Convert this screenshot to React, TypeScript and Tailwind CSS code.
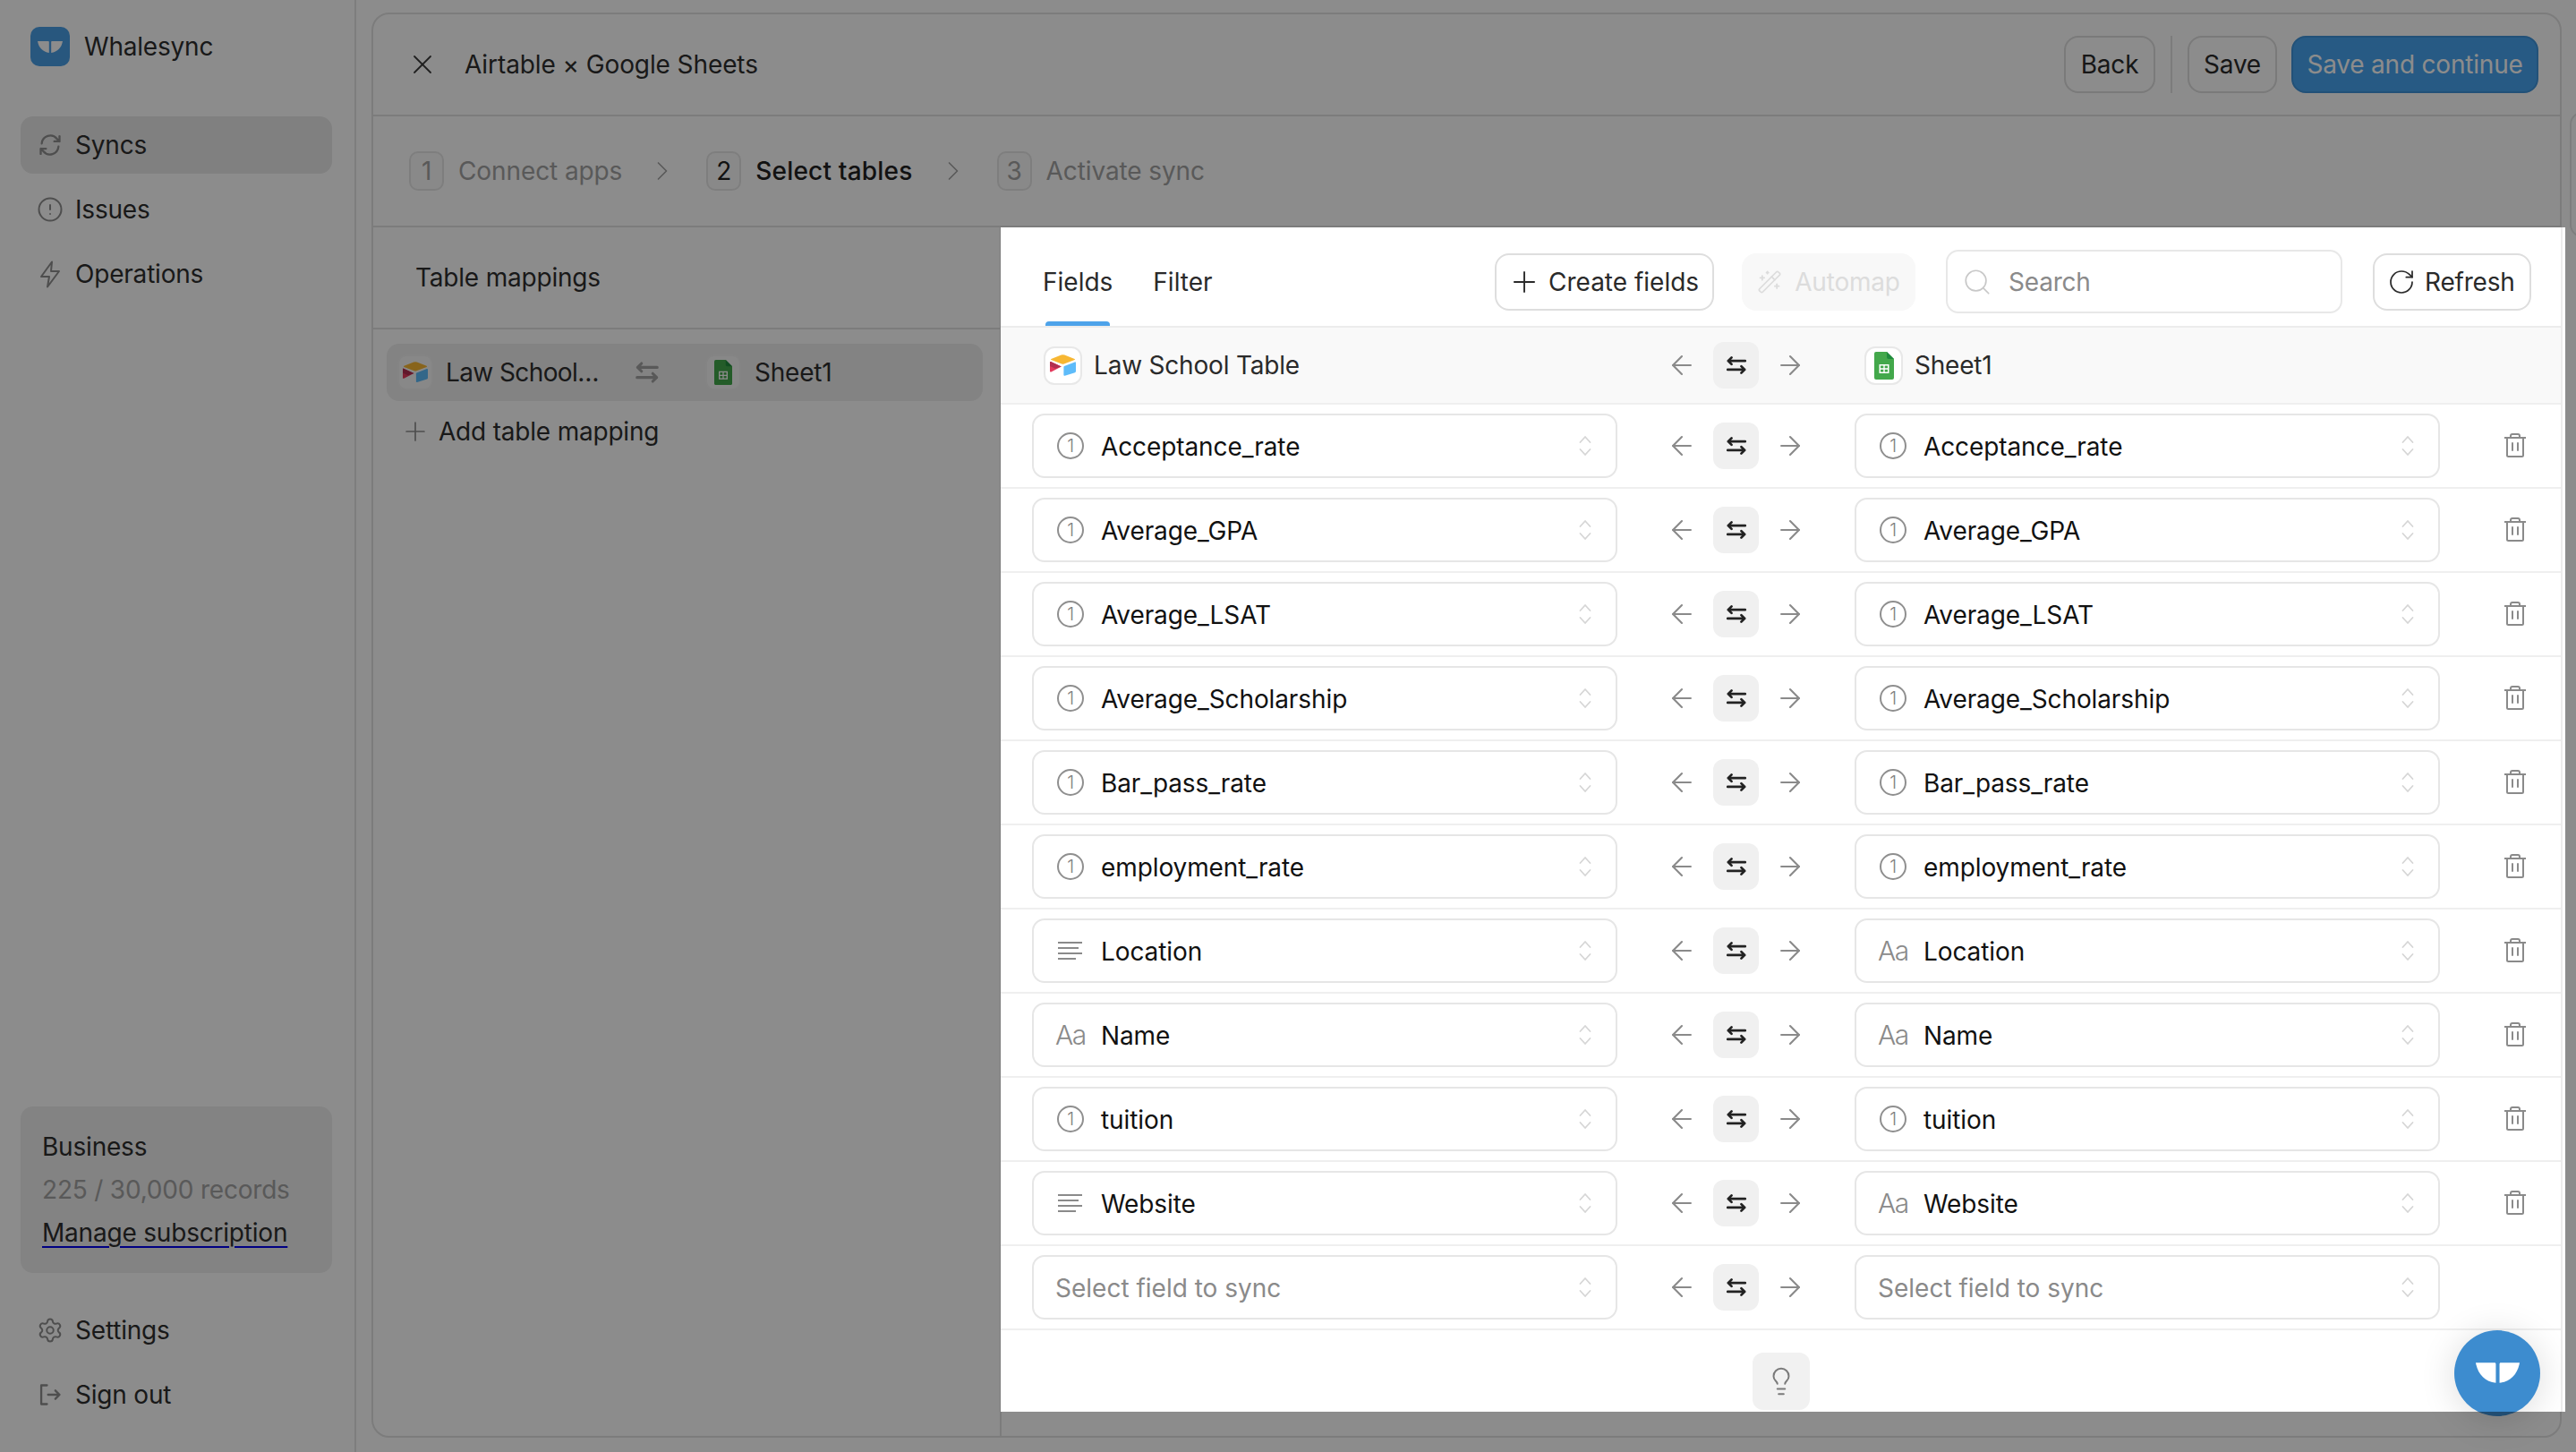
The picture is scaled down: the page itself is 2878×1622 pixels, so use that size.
import { ArrowLeft, ArrowRight, ChevronRight, Lightbulb, Plus, RotateCw, Search, Settings, WandSparkles, X, CircleAlert } from 'lucide-react'

type FieldKind = 'number' | 'lines' | 'text' | 'none'

interface FieldRow {
  name: string
  left: FieldKind
  right: FieldKind
}

const rows: FieldRow[] = [
  { name: 'Acceptance_rate', left: 'number', right: 'number' },
  { name: 'Average_GPA', left: 'number', right: 'number' },
  { name: 'Average_LSAT', left: 'number', right: 'number' },
  { name: 'Average_Scholarship', left: 'number', right: 'number' },
  { name: 'Bar_pass_rate', left: 'number', right: 'number' },
  { name: 'employment_rate', left: 'number', right: 'number' },
  { name: 'Location', left: 'lines', right: 'text' },
  { name: 'Name', left: 'text', right: 'text' },
  { name: 'tuition', left: 'number', right: 'number' },
  { name: 'Website', left: 'lines', right: 'text' },
]

function WhaleTail({ className }: { className: string }) {
  return (
    <svg viewBox="0 0 48 22" className={className} fill="#fff">
      <path d="M0 0H20.5C21.5 0 22 .6 22 1.5V22C10 21 2 12 0 0Z" />
      <path d="M48 0H27.5C26.5 0 26 .6 26 1.5V22C38 21 46 12 48 0Z" />
    </svg>
  )
}

function AirtableLogo({ className }: { className: string }) {
  return (
    <svg viewBox="0 0 29 24" className={className}>
      <path d="M12.6.5Q14.5 0 16.4.5L27.6 4.9Q28.6 5.5 27.6 6.1L15.8 10.6Q14.5 11 13.2 10.6L1.4 6.1Q.4 5.5 1.4 4.9Z" fill="#f7b733" />
      <path d="M16 13L27.8 8.4Q29 8.2 29 9.4V18.8Q29 19.8 28 20.2L16.6 23.8Q15.4 24 15.4 23V14Q15.4 13.3 16 13Z" fill="#5ebcfa" />
      <path d="M0 8.6Q0 7.6 1 8L12.8 13.4L1.4 19.4Q0 19.8 0 18.6Z" fill="#e3395c" />
      <path d="M1 8L12.8 13.4L6 15.8L0 13V8.6Q0 7.6 1 8Z" fill="#b22f50" />
    </svg>
  )
}

function SheetsLogo({ className }: { className: string }) {
  return (
    <svg viewBox="0 0 22 31" className={className}>
      <path d="M2 0H14L22 8V29A2 2 0 0 1 20 31H2A2 2 0 0 1 0 29V2A2 2 0 0 1 2 0Z" fill="#43a84b" />
      <path d="M14 0L22 8H16A2 2 0 0 1 14 6Z" fill="#1f8a3d" />
      <path d="M5.5 14H16.5V24H5.5Z" fill="#fff" />
      <path d="M7 15.5H10.3V18.3H7ZM11.7 15.5H15V18.3H11.7ZM7 19.7H10.3V22.5H7ZM11.7 19.7H15V22.5H11.7Z" fill="#43a84b" />
    </svg>
  )
}

function SwapIcon({ className }: { className: string }) {
  return (
    <svg viewBox="0 0 24 24" className={className} fill="none" stroke="currentColor" strokeWidth="2.5" strokeLinecap="round" strokeLinejoin="round">
      <path d="M21 7.5H3.5M7 4L3.5 7.5L7 11" />
      <path d="M3 16.5H20.5M17 13L20.5 16.5L17 20" />
    </svg>
  )
}

function SyncIcon({ className }: { className: string }) {
  return (
    <svg viewBox="0 0 24 24" className={className} fill="none" stroke="currentColor" strokeWidth="2" strokeLinecap="round" strokeLinejoin="round">
      <path d="M4 10.5A8.2 8.2 0 0 1 18.5 6L21 8.5M21 3.5V8.5H16" />
      <path d="M20 13.5A8.2 8.2 0 0 1 5.5 18L3 15.5M3 20.5V15.5H8" />
    </svg>
  )
}

function BoltIcon() {
  return (
    <svg viewBox="0 0 24 31" className="h-[31px] w-6" fill="none" stroke="currentColor" strokeWidth="2" strokeLinejoin="round">
      <path d="M14 1.500L2 18H11L9 29.500L22 12H13Z" />
    </svg>
  )
}

function SignOutIcon({ className }: { className: string }) {
  return (
    <svg viewBox="0 0 24 24" className={className} fill="none" stroke="currentColor" strokeWidth="2" strokeLinecap="round" strokeLinejoin="round">
      <path d="M9 3H3.500V21H9" />
      <path d="M10 12H21M17 8L21 12L17 16" />
    </svg>
  )
}

function TrashIcon() {
  return (
    <svg viewBox="0 0 24 27" className="h-[27px] w-6 text-[#8a8a8a]" fill="none" stroke="currentColor" strokeWidth="2" strokeLinejoin="round" strokeLinecap="round">
      <path d="M0 5H24" />
      <path d="M7 5V3A2 2 0 0 1 9 1H15A2 2 0 0 1 17 3V5" />
      <path d="M3 5V24.500A1.500 1.500 0 0 0 4.500 26H19.500A1.500 1.500 0 0 0 21 24.500V5" />
      <path d="M9 11V19M15 11V19" />
    </svg>
  )
}

function UpDown() {
  return (
    <svg viewBox="0 0 14 24" className="h-6 w-[14px] text-[#d6d6d6]" fill="none" stroke="currentColor" strokeWidth="1.800" strokeLinecap="round" strokeLinejoin="round">
      <path d="M1.500 8L7 2L12.500 8" />
      <path d="M1.500 16L7 22L12.500 16" />
    </svg>
  )
}

function KindIcon({ kind }: { kind: FieldKind }) {
  if (kind === 'number') {
    return (
      <span className="ml-[2px] flex h-[30px] w-[30px] items-center justify-center rounded-full border-2 border-[#8f8f8f] text-[20px] font-light text-[#7f7f7f]">
        1
      </span>
    )
  }
  if (kind === 'lines') {
    return (
      <svg viewBox="0 0 28 20" className="ml-[3px] h-5 w-7 text-[#8a8a8a]" fill="none" stroke="currentColor" strokeWidth="2">
        <path d="M0 1H27M0 7H23M0 13H27M0 19H20" />
      </svg>
    )
  }
  return <span className="text-[30px] font-light leading-none tracking-[-1.5px] text-[#8a8a8a]">Aa</span>
}

function FieldSelect({ kind, name }: { kind: FieldKind; name?: string }) {
  return (
    <div className="flex h-[72px] w-[654px] shrink-0 items-center rounded-[14px] border-2 border-[#e6e6e6] bg-white pl-6 pr-[27px]">
      {name ? (
        <>
          <span className="flex w-[34px] items-center">
            <KindIcon kind={kind} />
          </span>
          <span className="ml-[17px] pt-[2px] text-[28px] tracking-[-0.1px] text-[#111]">{name}</span>
        </>
      ) : (
        <span className="pt-[2px] text-[28px] tracking-normal text-[#8a8a8a]">Select field to sync</span>
      )}
      <span className="ml-auto flex">
        <UpDown />
      </span>
    </div>
  )
}

function Directions() {
  return (
    <div className="flex w-[265px] shrink-0 items-center justify-center gap-[18px]">
      <ArrowLeft size={34} strokeWidth={1.5} className="text-[#8a8a8a]" />
      <span className="flex h-[52px] w-[51px] items-center justify-center rounded-[12px] bg-[#f0f0f0] text-[#222]">
        <SwapIcon className="h-[26px] w-[26px]" />
      </span>
      <ArrowRight size={34} strokeWidth={1.5} className="text-[#8a8a8a]" />
    </div>
  )
}

function NavItem({ icon, label, active }: { icon: React.ReactNode; label: string; active?: boolean }) {
  return (
    <div className={`flex h-16 items-center gap-[13px] rounded-[14px] pl-[18px] text-[28px] text-[#2f2f2f] ${active ? 'bg-[#e9e9e9]' : ''}`}>
      <span className="flex h-[30px] w-[30px] items-center justify-center text-[#8f8f8f]">{icon}</span>
      {label}
    </div>
  )
}

function Step({ n, label, active }: { n: number; label: string; active?: boolean }) {
  return (
    <div className="flex items-center gap-4">
      <span className={`flex h-[44px] w-[39px] items-center justify-center rounded-[10px] border-2 border-[#e6e6e6] bg-[#fafafa] text-[28px] ${active ? 'text-[#222]' : 'text-[#a3a3a3]'}`}>
        {n}
      </span>
      <span className={`text-[28px] ${active ? 'font-medium tracking-[0.2px] text-[#222]' : 'tracking-[-0.1px] text-[#a3a3a3]'}`}>{label}</span>
    </div>
  )
}

function OutlineButton({ children, width }: { children: React.ReactNode; width: string }) {
  return (
    <button className={`flex h-16 items-center justify-center rounded-[16px] border-2 border-[#dedede] bg-white text-[28px] text-[#2a2a2a] ${width}`}>
      {children}
    </button>
  )
}

function Fab() {
  return (
    <div className="flex h-24 w-24 items-center justify-center rounded-full bg-[#3d8ccf] shadow-[0_4px_40px_rgba(0,0,0,0.14)]">
      <WhaleTail className="mt-[-2px] h-[23px] w-[49px]" />
    </div>
  )
}

export default function App() {
  return (
    <div className="relative h-[1622px] w-[2878px] overflow-hidden bg-white tracking-[-0.2px] [font-family:Inter,sans-serif]">
      {/* Page underneath the overlay */}
      <div className="flex h-full">
        <aside className="flex w-[398px] shrink-0 flex-col border-r-2 border-[#e6e6e6] pb-8 pl-[23px] pr-[25px]">
          <div className="mt-[30px] flex h-[44px] items-center gap-4 pl-[11px]">
            <span className="flex h-[44px] w-[44px] items-center justify-center rounded-[10px] bg-[#4a9fe6]">
              <WhaleTail className="h-[13px] w-[28px]" />
            </span>
            <span className="text-[28px] text-[#2f2f2f]">Whalesync</span>
          </div>
          <nav className="mt-14 flex flex-col gap-2">
            <NavItem icon={<SyncIcon className="h-[28px] w-[28px]" />} label="Syncs" active />
            <NavItem icon={<CircleAlert size={32} strokeWidth={1.6} />} label="Issues" />
            <NavItem icon={<BoltIcon />} label="Operations" />
          </nav>
          <div className="mt-auto flex h-[186px] flex-col justify-center gap-[13px] rounded-[14px] bg-[#eeeeee] pl-6 text-[28px] leading-[35px]">
            <span className="text-[#2f2f2f]">Business</span>
            <span className="text-[#a3a3a3]">225 / 30,000 records</span>
            <span className="text-[#2f2f2f] underline decoration-[#0000ee] decoration-2 underline-offset-[5px]">Manage subscription</span>
          </div>
          <div className="mt-8 flex flex-col gap-2">
            <NavItem icon={<Settings size={32} strokeWidth={1.6} />} label="Settings" />
            <NavItem icon={<SignOutIcon className="h-[28px] w-[28px]" />} label="Sign out" />
          </div>
        </aside>

        <main className="flex-1 pb-[16px] pl-[17px] pr-[16px] pt-[14px]">
          <div className="flex h-full flex-col rounded-[20px] border-2 border-[#e2e2e2] bg-white">
            <header className="flex h-[114px] shrink-0 items-center border-b-2 border-[#e2e2e2] pl-[37px] pr-6">
              <X size={36} strokeWidth={1.2} className="text-[#3a3a3a]" />
              <span className="ml-[29px] text-[28px] tracking-[-0.1px] text-[#2f2f2f]">Airtable × Google Sheets</span>
              <div className="ml-auto flex items-center">
                <OutlineButton width="w-[102px]">Back</OutlineButton>
                <span className="ml-[17px] mr-[17px] h-16 w-[2px] bg-[#e2e2e2]" />
                <OutlineButton width="w-[100px]">Save</OutlineButton>
                <button className="ml-4 flex h-16 w-[276px] items-center justify-center rounded-[16px] border-2 border-[#3f94da] bg-[#47a4f0] text-[28px] text-white">
                  Save and continue
                </button>
              </div>
            </header>

            <div className="flex h-[124px] shrink-0 items-center border-b-2 border-[#e2e2e2] pl-10">
              <Step n={1} label="Connect apps" />
              <ChevronRight size={36} strokeWidth={1.1} className="ml-[27px] mr-[31px] text-[#a3a3a3]" />
              <Step n={2} label="Select tables" active />
              <ChevronRight size={36} strokeWidth={1.1} className="ml-[27px] mr-[31px] text-[#a3a3a3]" />
              <Step n={3} label="Activate sync" />
            </div>

            <div className="flex min-h-0 flex-1">
              <div className="w-[702px] shrink-0 border-r-2 border-[#e2e2e2]">
                <div className="flex h-[114px] items-center border-b-2 border-[#e2e2e2] pl-[47px] text-[28px] text-[#2f2f2f]">Table mappings</div>
                <div className="px-[15px] pt-4">
                  <div className="flex h-16 w-[666px] items-center rounded-[14px] bg-[#eeeeee] pl-3 text-[28px] text-[#2f2f2f]">
                    <span className="flex h-10 w-10 items-center justify-center rounded-[10px] border-2 border-[#f0f0f0] bg-[#f8f8f8]">
                      <AirtableLogo className="w-[28px]" />
                    </span>
                    <span className="ml-[14px] w-[170px] whitespace-nowrap tracking-[-0.6px]">Law School…</span>
                    <SwapIcon className="ml-10 h-[30px] w-[30px] text-[#a3a3a3]" />
                    <span className="ml-[50px] flex h-10 w-10 items-center justify-center rounded-[10px] border-2 border-[#f0f0f0] bg-[#f8f8f8]">
                      <SheetsLogo className="w-[20px]" />
                    </span>
                    <span className="ml-[15px]">Sheet1</span>
                  </div>
                  <div className="flex h-[68px] items-center gap-[9px] pl-[15px] text-[28px] text-[#2f2f2f]">
                    <Plus size={34} strokeWidth={1.2} className="text-[#8f8f8f]" />
                    Add table mapping
                  </div>
                </div>
              </div>
            </div>
          </div>
        </main>
      </div>

      <div className="absolute left-[2871px] top-[125px] h-[140px] w-5 rounded-l-[14px] border-2 border-[#e6e6e6]" />
      <div className="absolute left-[2742px] top-[1486px]">
        <Fab />
      </div>

      {/* Dim layer */}
      <div className="absolute inset-0 bg-black/45" />

      {/* Highlighted fields panel */}
      <div className="absolute left-[1118px] top-[254px] h-[1323px] w-[1748px] overflow-hidden bg-white">
        <div className="mr-[3px] flex h-full flex-col border-r-2 border-[#ececec]">
          <div className="flex h-[112px] shrink-0 items-center border-b-2 border-[#ececec] pl-[47px] pr-[33px] pt-[11px]">
            <div className="relative flex h-full items-center gap-[45px] text-[28px] tracking-normal text-[#2a2a2a]">
              <span>Fields</span>
              <span>Filter</span>
              <span className="absolute bottom-0 left-[3px] h-[5px] w-[72px] rounded-t-[4px] bg-[#4da3ea]" />
            </div>
            <div className="ml-auto flex items-center">
              <button className="flex h-16 w-[245px] items-center gap-2 rounded-[16px] border-2 border-[#dedede] pl-[12px] text-[28px] tracking-normal text-[#2a2a2a]">
                <Plus size={38} strokeWidth={1.2} />
                Create fields
              </button>
              <button className="ml-[31px] flex h-16 w-[194px] items-center justify-center gap-[14px] rounded-[16px] bg-[#f8f8f8] text-[28px] text-[#dcdcdc]">
                <WandSparkles size={28} strokeWidth={1.5} />
                Automap
              </button>
              <div className="ml-[34px] flex h-[71px] w-[443px] items-center gap-[18px] rounded-[14px] border-2 border-[#e8e8e8] pl-4 text-[28px] text-[#8a8a8a]">
                <Search size={34} strokeWidth={1.2} className="text-[#c8c8c8]" />
                Search
              </div>
              <button className="ml-[34px] flex h-16 w-[177px] items-center gap-[10px] rounded-[16px] border-2 border-[#dedede] pl-[14px] text-[28px] text-[#2a2a2a]">
                <RotateCw size={32} strokeWidth={1.3} />
                Refresh
              </button>
            </div>
          </div>

          <div className="flex h-[86px] shrink-0 items-center border-b-2 border-[#efefef] bg-[#f9f9f9] text-[28px] text-[#2a2a2a]">
            <div className="flex w-[689px] shrink-0 items-center pl-[48px]">
              <span className="flex h-[43px] w-[43px] items-center justify-center rounded-[12px] border-2 border-[#e8e8e8] bg-white">
                <AirtableLogo className="w-[29px]" />
              </span>
              <span className="ml-[13px]">Law School Table</span>
            </div>
            <Directions />
            <div className="ml-[11px] flex items-center">
              <span className="flex h-[43px] w-[43px] items-center justify-center rounded-[12px] border-2 border-[#e8e8e8] bg-white">
                <SheetsLogo className="w-[22px]" />
              </span>
              <span className="ml-[13px]">Sheet1</span>
            </div>
          </div>

          {rows.map(row => (
            <div key={row.name} className="flex h-[94px] shrink-0 items-center border-b-2 border-[#efefef] pl-[35px]">
              <FieldSelect kind={row.left} name={row.name} />
              <Directions />
              <FieldSelect kind={row.right} name={row.name} />
              <span className="mb-[2px] ml-[72px] flex">
                <TrashIcon />
              </span>
            </div>
          ))}
          <div className="flex h-[94px] shrink-0 items-center border-b-2 border-[#efefef] pl-[35px]">
            <FieldSelect kind="none" />
            <Directions />
            <FieldSelect kind="none" />
          </div>

          <div className="flex flex-1 items-center justify-center">
            <span className="mt-[22px] flex h-16 w-16 items-center justify-center rounded-[12px] bg-[#f1f1f1]">
              <Lightbulb size={34} strokeWidth={1.4} className="text-[#7a7a7a]" />
            </span>
          </div>
        </div>
        <div className="absolute left-[1624px] top-[1232px]">
          <Fab />
        </div>
      </div>
    </div>
  )
}
